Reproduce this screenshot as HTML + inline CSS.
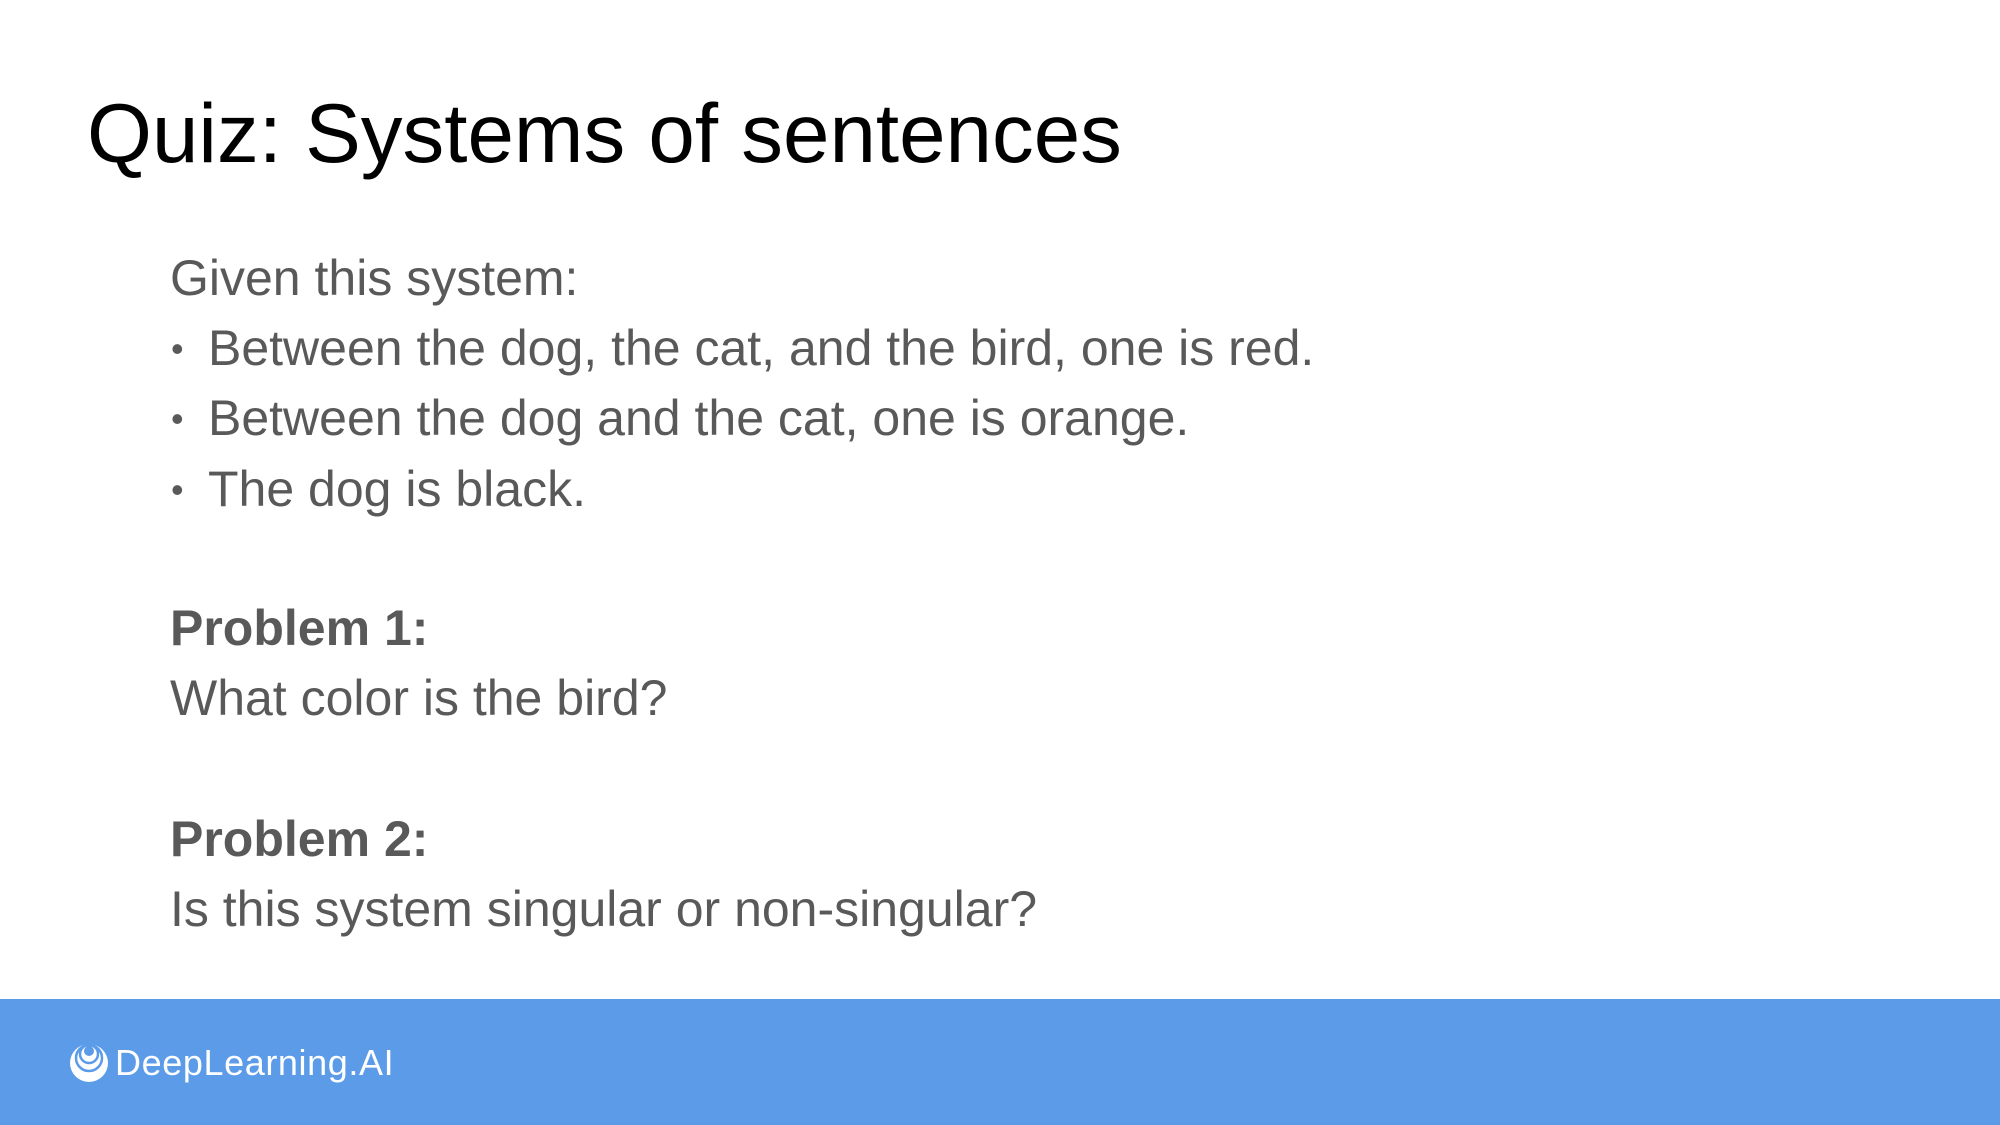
<!DOCTYPE html>
<html><head><meta charset="utf-8"><style>
html,body{margin:0;padding:0;width:2000px;height:1125px;overflow:hidden;background:#fff;font-family:"Liberation Sans",Arial,sans-serif}
.t{position:absolute;white-space:nowrap;line-height:1}
.b{font-size:50px;color:#595959}
.d{font-size:36px;color:#595959}
.footer{position:absolute;left:0;top:999px;width:2000px;height:126px;background:#5b9be8}
</style></head><body>
<div class="t" style="left:87px;top:92px;font-size:83.5px;color:#000">Quiz: Systems of sentences</div>
<div class="t b" style="left:170px;top:253px">Given this system:</div>
<div class="t d" style="left:171px;top:331px">•</div>
<div class="t b" style="left:208px;top:323px">Between the dog, the cat, and the bird, one is red.</div>
<div class="t d" style="left:171px;top:401px">•</div>
<div class="t b" style="left:208px;top:393px">Between the dog and the cat, one is orange.</div>
<div class="t d" style="left:171px;top:472px">•</div>
<div class="t b" style="left:208px;top:464px">The dog is black.</div>
<div class="t b" style="left:170px;top:603px;font-weight:bold">Problem 1:</div>
<div class="t b" style="left:170px;top:673px">What color is the bird?</div>
<div class="t b" style="left:170px;top:814px;font-weight:bold">Problem 2:</div>
<div class="t b" style="left:170px;top:884px">Is this system singular or non-singular?</div>
<div class="footer"></div>
<svg style="position:absolute;left:0;top:0" width="2000" height="1125">
<circle cx="89" cy="1063" r="19" fill="#fff"/>
<circle cx="89" cy="1058" r="13" fill="none" stroke="#5b9be8" stroke-width="2.5"/>
<circle cx="89" cy="1054" r="9" fill="none" stroke="#5b9be8" stroke-width="2.5"/>
<circle cx="89" cy="1051" r="5" fill="#5b9be8"/>
</svg>
<div class="t" style="left:115px;top:1045px;font-size:36px;letter-spacing:0.6px;color:#fff">DeepLearning.AI</div>
</body></html>
